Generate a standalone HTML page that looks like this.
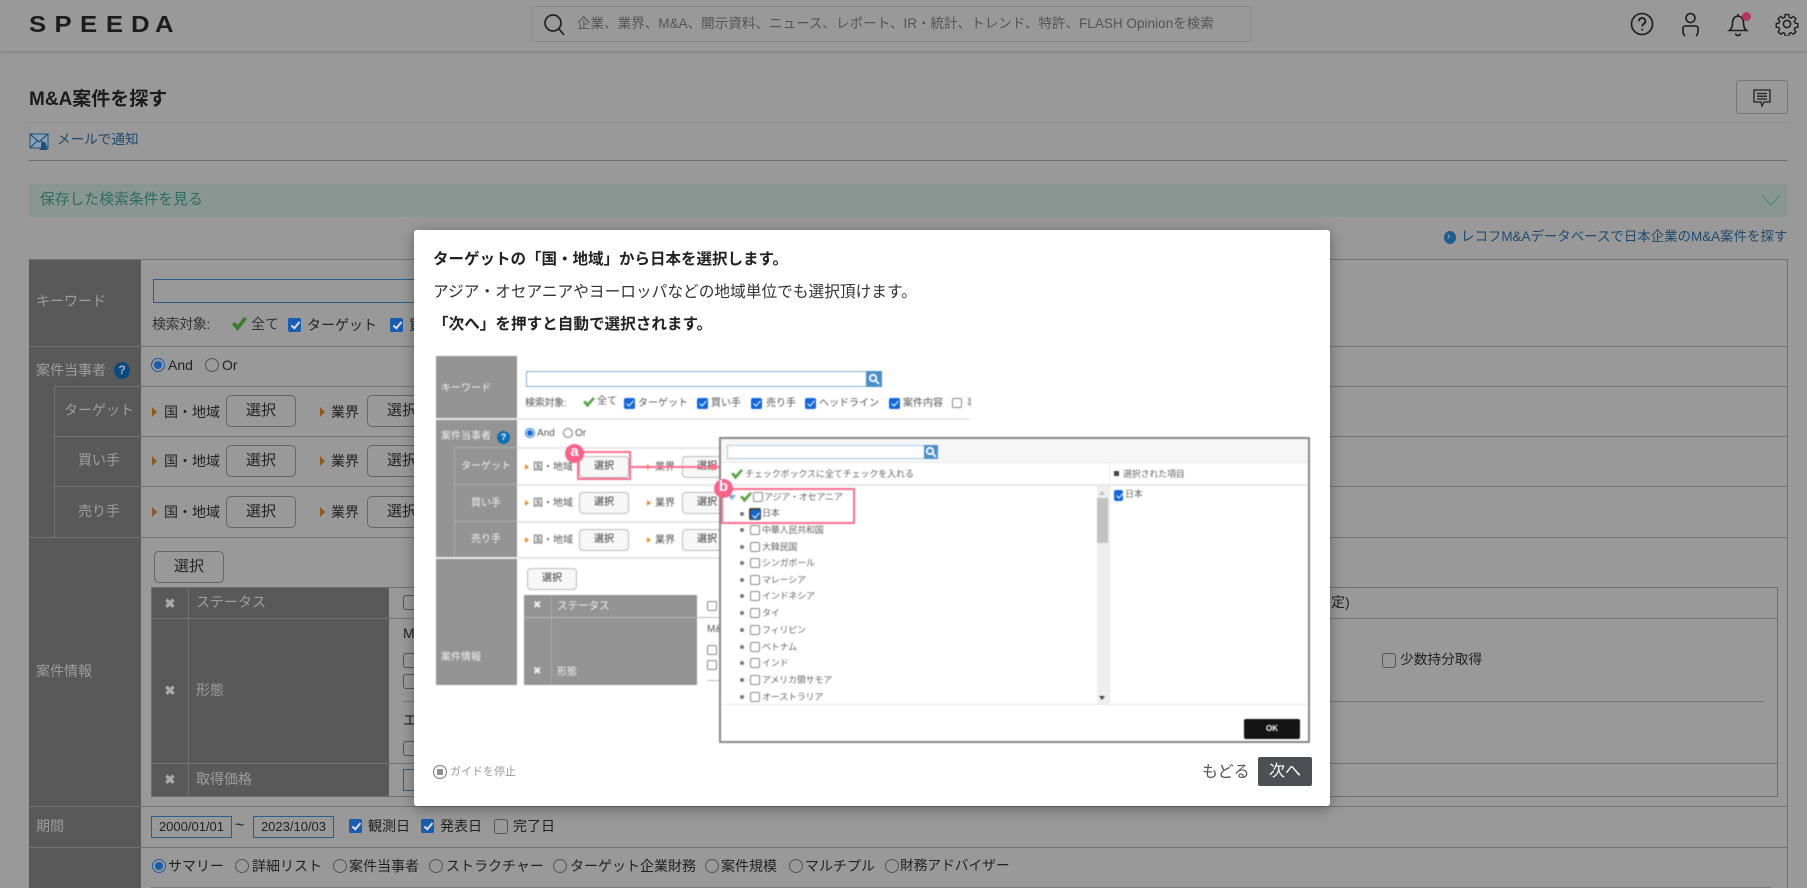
<!DOCTYPE html>
<html lang="ja"><head><meta charset="utf-8"><title>M&amp;A案件を探す</title>
<style>
html,body{margin:0;padding:0;width:1807px;height:888px;overflow:hidden;background:#999;font-family:"Liberation Sans","Noto Sans CJK JP",sans-serif;color:#222}
div,span,svg{position:absolute;box-sizing:border-box}
.t{white-space:nowrap;line-height:16px;font-size:14px}
.h{background:#737373;height:1px}
.v{background:#737373;width:1px}
.lb{color:#9d9d9d}
.btn{border:1px solid #666;border-radius:5px;width:70px;height:32px;text-align:center;line-height:30px;font-size:15px;color:#222}
.ar{width:0;height:0;border-left:5px solid #8a5a22;border-top:5px solid transparent;border-bottom:5px solid transparent}
.cb{width:13px;height:14px;border-radius:2px;background:#1a5cae}
.cb:after{content:"";position:absolute;left:4.5px;top:1.5px;width:3px;height:7px;border:solid #ddd;border-width:0 2px 2px 0;transform:rotate(40deg)}
.co{width:14px;height:15px;border-radius:3px;border:1.5px solid #555;background:#999}
.r{width:14px;height:14px;border:1px solid #555;border-radius:50%}
.ron{border:1.5px solid #1a5cae}
.ron:after{content:"";position:absolute;left:1.5px;top:1.5px;width:8px;height:8px;border-radius:50%;background:#1a5cae}
.in{border:1px solid #2a5f8c}
.x{color:#aaa;font-size:13px;font-weight:bold;line-height:16px;width:16px;text-align:center}
#modal{left:414px;top:230px;width:916px;height:576px;background:#fff;border-radius:3px;box-shadow:0 3px 14px rgba(0,0,0,.35)}
#img{left:0;top:0;width:1807px;height:888px;filter:blur(.45px)}
.s{white-space:nowrap;font-size:10px;line-height:12px;color:#555}
.w{white-space:nowrap;font-size:10px;line-height:12px;color:#f0f0f0}
.l{white-space:nowrap;font-size:9px;line-height:12px;color:#666;letter-spacing:-.2px}
.H{background:#e8e8e8;height:1.5px}
.HL{background:#adadad;height:1px}
.b2{border:1px solid #bbb;border-radius:4px;background:#f7f7f7;width:50px;height:22px;text-align:center;font-size:10px;line-height:20px;color:#333}
.a2{width:0;height:0;border-left:4px solid #ef8a2e;border-top:3.5px solid transparent;border-bottom:3.5px solid transparent}
.c2{width:11px;height:11px;border-radius:2px;background:#1467d8}
.c2:after{content:"";position:absolute;left:3.5px;top:1px;width:2.5px;height:6px;border:solid #fff;border-width:0 1.5px 1.5px 0;transform:rotate(40deg)}
.o2{width:10px;height:10px;border-radius:2px;border:1px solid #888;background:#fff}
.d{width:4px;height:4px;border-radius:50%;background:#777}
.pk{border:2px solid #ff6d8e}
.pc{width:19px;height:19px;border-radius:50%;background:#f8628a;color:#fff;font-size:15px;font-weight:bold;line-height:16px;text-align:center}
</style></head><body>

<!-- header -->
<div style="left:0;top:0;width:1807px;height:52px;background:#999;border-bottom:1px solid #8b8b8b;box-shadow:0 1px 2px rgba(0,0,0,.12)"></div>
<svg style="left:0;top:0" width="200" height="50"><text transform="scale(1.12 1)" x="25.9 48.7 71.4 94.6 117 138.4" y="32" font-family="Liberation Sans" font-weight="bold" font-size="23" fill="#1c1c1c">SPEEDA</text></svg>
<div style="left:531px;top:6px;width:720px;height:36px;border:1px solid #8a8a8a;border-radius:2px"></div>
<svg style="left:541px;top:12px" width="28" height="26" fill="none" stroke="#222" stroke-width="1.7"><circle cx="12" cy="11" r="8"/><path d="M18 17l5 6"/></svg>
<div class="t" style="left:577px;top:16px;font-size:13.55px;color:#555">企業、業界、M&amp;A、開示資料、ニュース、レポート、IR・統計、トレンド、特許、FLASH Opinionを検索</div>
<svg style="left:1628px;top:10px" width="28" height="28" fill="none" stroke="#1c1c1c" stroke-width="1.6"><circle cx="14" cy="14" r="10.5"/><path d="M10.8 11.2c0-4.2 6.6-4.2 6.6 0 0 2.6-3.2 2.6-3.2 5.2" stroke-width="1.8"/><circle cx="14.2" cy="19.6" r="1" fill="#1c1c1c" stroke="none"/></svg>
<svg style="left:1678px;top:10px" width="26" height="28" fill="none" stroke="#1c1c1c" stroke-width="1.6"><circle cx="12.5" cy="8" r="4.5"/><path d="M7 26c-1-1-2-2-2-5v-3c0-1.200 1-2 2-2h11c1 0 2 .8 2 2v3c0 3-1 4-2 5"/></svg>
<svg style="left:1726px;top:10px" width="26" height="28" fill="none" stroke="#1c1c1c" stroke-width="1.6"><path d="M12 4v2c-4 .6-5.500 3.400-5.500 7 0 4-1 6-3 7.500h17c-2-1.500-3-3.500-3-7.500 0-3.600-1.500-6.400-5.500-7"/><path d="M9.500 23.500c.6 2.700 4.400 2.700 5 0"/></svg>
<div style="left:1742px;top:12px;width:9px;height:9px;border-radius:50%;background:#b5385a"></div>
<svg style="left:1775px;top:12px" width="24" height="24" viewBox="0 0 24 24" fill="none" stroke="#1c1c1c" stroke-width="1.5"><circle cx="12" cy="12" r="3.600"/><path d="M10 1.500h4l.6 3.100 1.900.8 2.600-1.800 2.800 2.800-1.800 2.600.8 1.900 3.100.6v4l-3.100.6-.8 1.900 1.800 2.600-2.800 2.800-2.600-1.800-1.900.8-.6 3.100h-4l-.6-3.100-1.900-.8-2.600 1.800-2.800-2.800 1.800-2.600-.8-1.900-3.100-.6v-4l3.100-.6.8-1.900-1.800-2.600 2.800-2.800 2.600 1.800 1.900-.8z" transform="translate(1.200 1.200) scale(.9)"/></svg>

<!-- title -->
<div class="t" style="left:29px;top:89px;font-size:19px;line-height:22px;font-weight:bold;color:#1c1c1c">M&amp;A案件を探す</div>
<div style="left:1736px;top:80px;width:52px;height:34px;border:1px solid #777;border-radius:3px"></div>
<svg style="left:1752px;top:88px" width="20" height="20" fill="none" stroke="#222" stroke-width="1.300"><path d="M2 2h16v12h-6l-2 4-1-4H2z"/><path d="M5 5.500h10M5 8.200h10M5 11h10"/></svg>
<div class="h" style="left:29px;top:122px;width:1758px;background:#8e8e8e"></div>
<svg style="left:29px;top:132px" width="24" height="22"><rect x="1" y="2" width="18" height="14" fill="#8aa2b6" stroke="#1f5278"/><path d="M1 2l9 8 9-8M1 16l7-7M19 16l-7-7" fill="none" stroke="#1f5278" stroke-width="1.200"/><path d="M12 12c0-3 5-3 5 0v4l2 2h-9l2-2z" fill="#1f5278"/></svg>
<div class="t" style="left:57px;top:132px;color:#1f4a6e;font-size:13.6px">メールで通知</div>
<div class="h" style="left:29px;top:160px;width:1758px;background:#6f6f6f"></div>

<div style="left:29px;top:184px;width:1758px;height:33px;background:#8a9691"></div>
<div class="t" style="left:40px;top:192px;font-size:14.800px;color:#2f6d5f">保存した検索条件を見る</div>
<svg style="left:1761px;top:193px" width="20" height="14" fill="none" stroke="#50897a" stroke-width="1.200"><path d="M1 2l9 10 9-10"/></svg>
<div style="left:1444px;top:231px;width:12px;height:13px;border-radius:50%;background:#1f5e8c"></div>
<div class="t" style="left:1447px;top:229px;font-size:10px;color:#bbb">›</div>
<div class="t" style="left:1461px;top:229px;color:#1f4a6e;font-size:13.45px">レコフM&amp;Aデータベースで日本企業のM&amp;A案件を探す</div>

<!-- main table -->
<div style="left:29px;top:259px;width:1759px;height:629px;border-top:1px solid #737373;border-right:1px solid #737373"></div>
<div style="left:29px;top:260px;width:112px;height:628px;background:#595959"></div>
<div class="h" style="left:29px;top:346px;width:1758px"></div>
<div class="h" style="left:54px;top:386px;width:1733px"></div>
<div class="h" style="left:54px;top:436px;width:1733px"></div>
<div class="h" style="left:54px;top:486px;width:1733px"></div>
<div class="h" style="left:29px;top:537px;width:1758px"></div>
<div class="h" style="left:29px;top:806px;width:1758px"></div>
<div class="h" style="left:29px;top:847px;width:1758px"></div>
<div class="v" style="left:54px;top:386px;height:151px"></div>

<div class="t lb" style="left:36px;top:293px">キーワード</div>
<div class="t lb" style="left:36px;top:362px">案件当事者</div>
<div style="left:114px;top:362px;width:16px;height:17px;border-radius:50%;background:#0d4a7c;color:#aac;font-size:12px;font-weight:bold;line-height:17px;text-align:center">?</div>
<div class="t lb" style="left:64px;top:402px">ターゲット</div>
<div class="t lb" style="left:78px;top:452px">買い手</div>
<div class="t lb" style="left:78px;top:503px">売り手</div>
<div class="t lb" style="left:36px;top:663px">案件情報</div>
<div class="t lb" style="left:36px;top:818px">期間</div>

<div class="in" style="left:153px;top:279px;width:300px;height:24px"></div>
<div class="t" style="left:152px;top:316px;color:#333;letter-spacing:-.4px">検索対象:</div>
<svg style="left:230px;top:316px" width="18" height="16"><path d="M2 8l3-2 2.500 3L14 1l3 2-9.500 12z" fill="#3f7a33"/></svg>
<div class="t" style="left:251px;top:316px;color:#333">全て</div>
<div class="cb" style="left:288px;top:318px"></div><div class="t" style="left:307px;top:317px">ターゲット</div>
<div class="cb" style="left:390px;top:318px"></div><div class="t" style="left:409px;top:317px">買い手</div>

<div class="r ron" style="left:151px;top:358px"></div><div class="t" style="left:168px;top:357px">And</div>
<div class="r" style="left:205px;top:358px"></div><div class="t" style="left:222px;top:357px">Or</div>

<div class="ar" style="left:152px;top:407px"></div><div class="t" style="left:164px;top:404px">国・地域</div><div class="btn" style="left:226px;top:395px">選択</div>
<div class="ar" style="left:320px;top:407px"></div><div class="t" style="left:331px;top:404px">業界</div><div class="btn" style="left:367px;top:395px">選択</div>
<div class="ar" style="left:152px;top:456px"></div><div class="t" style="left:164px;top:453px">国・地域</div><div class="btn" style="left:226px;top:445px">選択</div>
<div class="ar" style="left:320px;top:456px"></div><div class="t" style="left:331px;top:453px">業界</div><div class="btn" style="left:367px;top:445px">選択</div>
<div class="ar" style="left:152px;top:507px"></div><div class="t" style="left:164px;top:504px">国・地域</div><div class="btn" style="left:226px;top:496px">選択</div>
<div class="ar" style="left:320px;top:507px"></div><div class="t" style="left:331px;top:504px">業界</div><div class="btn" style="left:367px;top:496px">選択</div>

<div class="btn" style="left:154px;top:551px">選択</div>
<div style="left:151px;top:587px;width:1627px;height:210px;border:1px solid #6e6e6e"></div>
<div style="left:152px;top:588px;width:237px;height:208px;background:#595959"></div>
<div class="h" style="left:152px;top:618px;width:1625px"></div>
<div class="h" style="left:152px;top:763px;width:1625px"></div>
<div class="v" style="left:188px;top:588px;height:208px"></div>
<div class="x" style="left:162px;top:596px">✖</div><div class="t lb" style="left:196px;top:594px">ステータス</div>
<div class="x" style="left:162px;top:683px">✖</div><div class="t lb" style="left:196px;top:682px">形態</div>
<div class="x" style="left:162px;top:772px">✖</div><div class="t lb" style="left:196px;top:771px">取得価格</div>
<div class="co" style="left:403px;top:595px"></div>
<div class="t" style="left:403px;top:625px">M</div>
<div class="co" style="left:403px;top:653px"></div>
<div class="co" style="left:403px;top:674px"></div>
<div class="h" style="left:403px;top:701px;width:1361px"></div>
<div class="t" style="left:403px;top:712px">エ</div>
<div class="co" style="left:403px;top:741px"></div>
<div class="in" style="left:403px;top:769px;width:40px;height:22px"></div>
<div class="t" style="left:1331px;top:594px">定)</div>
<div class="co" style="left:1382px;top:653px"></div>
<div class="t" style="left:1400px;top:652px;font-size:13.7px">少数持分取得</div>

<div class="in" style="left:151px;top:816px;width:81px;height:22px;font-size:13px;line-height:20px;text-align:center;color:#222">2000/01/01</div>
<div class="t" style="left:235px;top:818px;font-size:16px">~</div>
<div class="in" style="left:253px;top:816px;width:81px;height:22px;font-size:13px;line-height:20px;text-align:center;color:#222">2023/10/03</div>
<div class="cb" style="left:349px;top:819px"></div><div class="t" style="left:368px;top:818px">観測日</div>
<div class="cb" style="left:421px;top:819px"></div><div class="t" style="left:440px;top:818px">発表日</div>
<div class="co" style="left:494px;top:819px"></div><div class="t" style="left:513px;top:818px">完了日</div>

<div class="r ron" style="left:152px;top:859px"></div><div class="t" style="left:168px;top:858px">サマリー</div>
<div class="r" style="left:235px;top:859px"></div><div class="t" style="left:252px;top:858px">詳細リスト</div>
<div class="r" style="left:333px;top:859px"></div><div class="t" style="left:349px;top:858px">案件当事者</div>
<div class="r" style="left:429px;top:859px"></div><div class="t" style="left:446px;top:858px">ストラクチャー</div>
<div class="r" style="left:553px;top:859px"></div><div class="t" style="left:570px;top:858px">ターゲット企業財務</div>
<div class="r" style="left:705px;top:859px"></div><div class="t" style="left:721px;top:858px">案件規模</div>
<div class="r" style="left:789px;top:859px"></div><div class="t" style="left:805px;top:858px">マルチプル</div>
<div class="r" style="left:885px;top:859px"></div><div class="t" style="left:900px;top:858px;font-size:13.7px">財務アドバイザー</div>
<div style="left:151px;top:887px;width:1620px;border-top:1px dotted #666;height:1px"></div>

<!-- modal -->
<div id="modal"></div>
<div class="t" style="left:433px;top:252px;font-size:15.500px;font-weight:bold;color:#222">ターゲットの「国・地域」から日本を選択します。</div>
<div class="t" style="left:433px;top:285px;font-size:15.7px;color:#333">アジア・オセアニアやヨーロッパなどの地域単位でも選択頂けます。</div>
<div class="t" style="left:433px;top:317px;font-size:15.6px;font-weight:bold;color:#222">「次へ」を押すと自動で選択されます。</div>

<div id="img">
<div style="left:436px;top:356px;width:81px;height:329px;background:#949494"></div>
<div style="left:524px;top:595px;width:173px;height:90px;background:#949494"></div>
<div class="H" style="left:436px;top:418px;width:534px"></div>
<div class="H" style="left:517px;top:447px;width:202px"></div>
<div class="H" style="left:517px;top:484px;width:202px"></div>
<div class="H" style="left:517px;top:521px;width:202px"></div>
<div class="H" style="left:436px;top:557px;width:283px"></div>
<div class="HL" style="left:454px;top:447px;width:63px"></div>
<div class="HL" style="left:454px;top:484px;width:63px"></div>
<div class="HL" style="left:454px;top:521px;width:63px"></div>
<div style="left:454px;top:448px;width:1px;height:109px;background:#aaa"></div>
<div style="left:551px;top:595px;width:1px;height:90px;background:#aaa"></div>
<div style="left:524px;top:617px;width:195px;height:1px;background:#bbb"></div>
<div class="w" style="left:441px;top:383px">キーワード</div>
<div class="w" style="left:441px;top:431px">案件当事者</div>
<div style="left:497px;top:431px;width:13px;height:13px;border-radius:50%;background:#0c6fb3;color:#fff;font-size:9px;font-weight:bold;line-height:13px;text-align:center">?</div>
<div class="w" style="left:461px;top:461px">ターゲット</div>
<div class="w" style="left:471px;top:498px">買い手</div>
<div class="w" style="left:471px;top:534px">売り手</div>
<div class="w" style="left:441px;top:652px">案件情報</div>
<div class="w" style="left:533px;top:600px">✖</div><div class="w" style="left:557px;top:600px;font-size:10.500px">ステータス</div>
<div class="w" style="left:533px;top:666px">✖</div><div class="w" style="left:557px;top:667px">形態</div>

<div style="left:526px;top:371px;width:341px;height:16px;border:1px solid #7cb0de"></div>
<div style="left:866px;top:371px;width:16px;height:16px;background:#4d90c8"></div>
<svg style="left:868px;top:373px" width="12" height="12" fill="none" stroke="#fff" stroke-width="1.800"><circle cx="5" cy="5" r="3.200"/><path d="M7.500 7.500l3.500 3.500"/></svg>
<div class="s" style="left:525px;top:398px;letter-spacing:-.3px">検索対象:</div>
<svg style="left:582px;top:396px" width="14" height="12"><path d="M1 6l2.500-1.500L5.500 7 11 1l2 1.500-7.500 9z" fill="#58a645"/></svg>
<div class="s" style="left:597px;top:396px">全て</div>
<div class="c2" style="left:624px;top:398px"></div><div class="s" style="left:638px;top:398px">ターゲット</div>
<div class="c2" style="left:697px;top:398px"></div><div class="s" style="left:711px;top:398px">買い手</div>
<div class="c2" style="left:751px;top:398px"></div><div class="s" style="left:766px;top:398px">売り手</div>
<div class="c2" style="left:805px;top:398px"></div><div class="s" style="left:819px;top:398px">ヘッドライン</div>
<div class="c2" style="left:889px;top:398px"></div><div class="s" style="left:903px;top:398px">案件内容</div>
<div class="o2" style="left:952px;top:398px"></div>
<div style="left:967px;top:398px;width:4px;height:12px;overflow:hidden"><div class="s" style="left:0;top:0">事</div></div>

<div style="left:525px;top:428px;width:10px;height:10px;border-radius:50%;border:1px solid #1467d8"></div><div style="left:527px;top:430px;width:6px;height:6px;border-radius:50%;background:#1467d8"></div>
<div class="s" style="left:537px;top:428px">And</div>
<div style="left:563px;top:428px;width:10px;height:10px;border-radius:50%;border:1px solid #777"></div><div class="s" style="left:575px;top:428px">Or</div>

<div class="a2" style="left:525px;top:464px"></div><div class="s" style="left:533px;top:462px">国・地域</div><div class="b2" style="left:579px;top:456px">選択</div>
<div class="a2" style="left:647px;top:464px"></div><div class="s" style="left:655px;top:462px">業界</div><div class="b2" style="left:682px;top:456px">選択</div>
<div class="a2" style="left:525px;top:500px"></div><div class="s" style="left:533px;top:498px">国・地域</div><div class="b2" style="left:579px;top:492px">選択</div>
<div class="a2" style="left:647px;top:500px"></div><div class="s" style="left:655px;top:498px">業界</div><div class="b2" style="left:682px;top:492px">選択</div>
<div class="a2" style="left:525px;top:537px"></div><div class="s" style="left:533px;top:535px">国・地域</div><div class="b2" style="left:579px;top:529px">選択</div>
<div class="a2" style="left:647px;top:537px"></div><div class="s" style="left:655px;top:535px">業界</div><div class="b2" style="left:682px;top:529px">選択</div>
<div class="b2" style="left:527px;top:568px">選択</div>

<div class="o2" style="left:707px;top:601px"></div>
<div class="s" style="left:707px;top:624px">M&amp;</div>
<div class="o2" style="left:707px;top:645px"></div>
<div class="o2" style="left:707px;top:660px"></div>
<div style="left:707px;top:680px;width:12px;height:1px;background:#bbb"></div>

<!-- pink a -->
<div class="pk" style="left:577px;top:451px;width:54px;height:29px"></div>
<div style="left:631px;top:466px;width:88px;height:2px;background:#ff6d8e"></div>
<div style="left:712px;top:463px;width:0;height:0;border-left:7px solid #ff6d8e;border-top:4px solid transparent;border-bottom:4px solid transparent"></div>
<div class="pc" style="left:565px;top:444px">a</div>

<!-- popup -->
<div style="left:719px;top:437px;width:591px;height:306px;background:#fff;border:2px solid #888"></div>
<div style="left:721px;top:439px;width:587px;height:23px;background:#f6f6f6"></div>
<div style="left:727px;top:445px;width:198px;height:14px;background:#fff;border:1px solid #a8cbe8"></div>
<div style="left:924px;top:445px;width:14px;height:14px;background:#4d90c8"></div>
<svg style="left:925px;top:446px" width="12" height="12" fill="none" stroke="#fff" stroke-width="1.800"><circle cx="5" cy="5" r="3.200"/><path d="M7.500 7.500l3.500 3.500"/></svg>
<div class="H" style="left:721px;top:462px;width:587px;height:1px"></div>
<svg style="left:730px;top:468px" width="14" height="12"><path d="M1 6l2.500-1.500L5.500 7 11 1l2 1.500-7.500 9z" fill="#58a645"/></svg>
<div class="l" style="left:745px;top:468px;letter-spacing:-.1px">チェックボックスに全てチェックを入れる</div>
<div style="left:1109px;top:463px;width:1px;height:241px;background:#e8e8e8"></div>
<div style="left:1114px;top:471px;width:5px;height:5px;background:#444"></div>
<div class="l" style="left:1123px;top:468px">選択された項目</div>
<div class="H" style="left:721px;top:484px;width:587px"></div>
<div class="H" style="left:721px;top:704px;width:587px;height:1px"></div>
<div style="left:1097px;top:486px;width:12px;height:218px;background:#efefef"></div>
<div style="left:1097px;top:498px;width:11px;height:45px;background:#c1c1c1"></div>
<div style="left:1099px;top:491px;width:0;height:0;border-left:3.500px solid transparent;border-right:3.500px solid transparent;border-bottom:4px solid #bbb"></div>
<div style="left:1099px;top:696px;width:0;height:0;border-left:3.500px solid transparent;border-right:3.500px solid transparent;border-top:4px solid #444"></div>
<div class="c2" style="left:1114px;top:490px;width:9px;height:11px"></div>
<div class="l" style="left:1125px;top:488px">日本</div>

<div style="left:728px;top:495px;width:0;height:0;border-left:4px solid transparent;border-right:4px solid transparent;border-top:5px solid #7aa7e0"></div>
<svg style="left:739px;top:491px" width="13" height="12"><path d="M1 6l2.500-1.500L5.500 7 11 1l2 1.500-7.500 9z" fill="#58a645"/></svg>
<div class="o2" style="left:753px;top:492px"></div><div class="l" style="left:764px;top:491px">アジア・オセアニア</div>
<div class="d" style="left:740px;top:512px"></div>
<div style="left:749px;top:508px;width:12px;height:12px;border-radius:2px;background:#444"></div>
<div class="c2" style="left:750.500px;top:509.500px;width:9px;height:9px"></div>
<div class="l" style="left:762px;top:507px">日本</div>
<div class="d" style="left:740px;top:528px"></div><div class="o2" style="left:750px;top:525px"></div><div class="l" style="left:762px;top:524px">中華人民共和国</div>
<div class="d" style="left:740px;top:545px"></div><div class="o2" style="left:750px;top:542px"></div><div class="l" style="left:762px;top:541px">大韓民国</div>
<div class="d" style="left:740px;top:561px"></div><div class="o2" style="left:750px;top:558px"></div><div class="l" style="left:762px;top:557px">シンガポール</div>
<div class="d" style="left:740px;top:578px"></div><div class="o2" style="left:750px;top:575px"></div><div class="l" style="left:762px;top:574px">マレーシア</div>
<div class="d" style="left:740px;top:594px"></div><div class="o2" style="left:750px;top:591px"></div><div class="l" style="left:762px;top:590px">インドネシア</div>
<div class="d" style="left:740px;top:611px"></div><div class="o2" style="left:750px;top:608px"></div><div class="l" style="left:762px;top:607px">タイ</div>
<div class="d" style="left:740px;top:628px"></div><div class="o2" style="left:750px;top:625px"></div><div class="l" style="left:762px;top:624px">フィリピン</div>
<div class="d" style="left:740px;top:645px"></div><div class="o2" style="left:750px;top:642px"></div><div class="l" style="left:762px;top:641px">ベトナム</div>
<div class="d" style="left:740px;top:661px"></div><div class="o2" style="left:750px;top:658px"></div><div class="l" style="left:762px;top:657px">インド</div>
<div class="d" style="left:740px;top:678px"></div><div class="o2" style="left:750px;top:675px"></div><div class="l" style="left:762px;top:674px">アメリカ領サモア</div>
<div class="d" style="left:740px;top:695px"></div><div class="o2" style="left:750px;top:692px"></div><div class="l" style="left:762px;top:691px">オーストラリア</div>
<div class="pk" style="left:721px;top:488px;width:134px;height:36px"></div>
<div class="pc" style="left:714px;top:479px">b</div>
<div style="left:1244px;top:719px;width:56px;height:20px;background:#141414;border-radius:2px;color:#fff;font-size:8px;font-weight:bold;text-align:center;line-height:20px">OK</div>
</div>

<svg style="left:432px;top:764px" width="16" height="16" fill="none"><circle cx="8" cy="8" r="6.500" stroke="#8d8f94" stroke-width="1.300"/><rect x="5" y="5" width="6" height="6" fill="#8d8f94"/></svg>
<div class="t" style="left:450px;top:764px;font-size:11px;color:#999">ガイドを停止</div>
<div class="t" style="left:1202px;top:765px;font-size:16px;color:#555">もどる</div>
<div style="left:1258px;top:757px;width:54px;height:29px;background:#4c4f53;border-radius:2px;color:#fff;font-size:16px;line-height:30px;text-align:center">次へ</div>
</body></html>
